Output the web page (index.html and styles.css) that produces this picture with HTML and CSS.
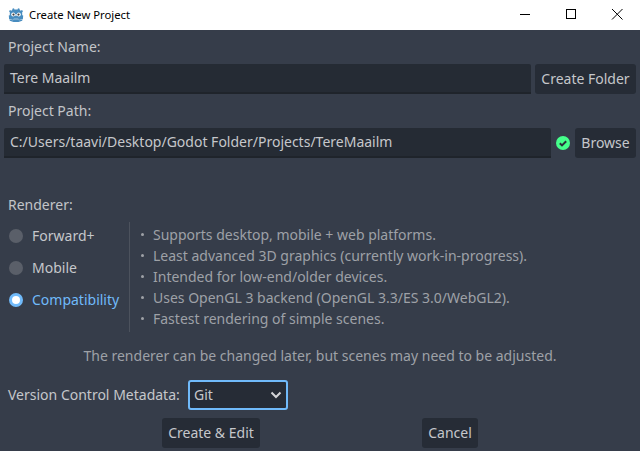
FILE: index.html
```html
<!DOCTYPE html>
<html lang="en">
<head>
<meta charset="utf-8">
<title>Create New Project</title>
<link rel="stylesheet" href="styles.css">
</head>
<body>
<div class="window">
  <header class="titlebar">
    <svg class="app-icon" width="16" height="16" viewBox="0 0 16 16">
      <path fill="#478cbf" d="M6 1.2 6.4 2.6H9.6L10 1.2 11.6 1.7 11.7 3.1 12.7 3.8 14 3 15 4.2 14.2 5.3V8.2L15.2 8.6 14.9 12.2 10.6 12.9 10.3 11.8H5.7L5.4 12.9 1.1 12.2.8 8.6 1.8 8.2V5.3L1 4.2 2 3 3.3 3.8 4.3 3.1 4.4 1.7Z"/>
      <path fill="#478cbf" d="M1.6 12.7 5.1 13.3 5.6 12.3H10.4L10.9 13.3 14.4 12.7 14.2 13.8 10.5 14.9H5.5L1.8 13.8Z"/>
      <circle cx="5.2" cy="7.4" r="2" fill="#fff"/><circle cx="10.8" cy="7.4" r="2" fill="#fff"/>
      <circle cx="5.5" cy="7.6" r="1.1" fill="#414042"/><circle cx="10.5" cy="7.6" r="1.1" fill="#414042"/>
      <rect x="7.4" y="7" width="1.2" height="2" fill="#fff"/>
    </svg>
    <span class="title">Create New Project</span>
    <div class="controls">
      <svg class="ctl" width="46" height="30" viewBox="0 0 46 30"><path d="M18 14.5H28" stroke="#000" fill="none"/></svg>
      <svg class="ctl" width="46" height="30" viewBox="0 0 46 30"><rect x="18.5" y="9.5" width="9" height="9" stroke="#000" fill="none"/></svg>
      <svg class="ctl" width="46" height="30" viewBox="0 0 46 30"><path d="M18 9 28.5 19.5M28.5 9 18 19.5" stroke="#000" fill="none"/></svg>
    </div>
  </header>
  <main class="content">
    <div class="label first">Project Name:</div>
    <div class="row">
      <div class="input grow">Tere Maailm</div>
      <div class="btn folder">Create Folder</div>
    </div>
    <div class="label second">Project Path:</div>
    <div class="row">
      <div class="input grow">C:/Users/taavi/Desktop/Godot Folder/Projects/TereMaailm</div>
      <svg class="status" width="14" height="14" viewBox="0 0 14 14"><circle cx="7" cy="7" r="7" fill="#45ff8b"/><path d="M3.8 7.2 6 9.4 10.2 5.2" stroke="#2a303a" stroke-width="2" fill="none"/></svg>
      <div class="btn browse">Browse</div>
    </div>
    <div class="label renderer">Renderer:</div>
    <div class="render-row">
      <div class="radios">
        <div class="radio"><span class="dot"></span>Forward+</div>
        <div class="radio"><span class="dot"></span>Mobile</div>
        <div class="radio on"><span class="dot"></span>Compatibility</div>
      </div>
      <div class="sep"></div>
      <ul class="features">
        <li>Supports desktop, mobile + web platforms.</li>
        <li>Least advanced 3D graphics (currently work-in-progress).</li>
        <li>Intended for low-end/older devices.</li>
        <li>Uses OpenGL 3 backend (OpenGL 3.3/ES 3.0/WebGL2).</li>
        <li>Fastest rendering of simple scenes.</li>
      </ul>
    </div>
    <div class="note">The renderer can be changed later, but scenes may need to be adjusted.</div>
    <div class="vcs">
      <span class="vcs-label">Version Control Metadata:</span>
      <div class="select">Git
        <svg width="12" height="8" viewBox="0 0 12 8"><path d="M1.5 1.5 6 6 10.5 1.5" stroke="#d4d5d8" stroke-width="2" fill="none"/></svg>
      </div>
    </div>
    <div class="actions">
      <div class="btn create">Create &amp; Edit</div>
      <div class="btn cancel">Cancel</div>
    </div>
  </main>
</div>
</body>
</html>
```
FILE: styles.css
```css
* { box-sizing: border-box; }
html, body { margin: 0; height: 100%; overflow: hidden; }
body { font-family: "Noto Sans", sans-serif; font-size: 14px; line-height: 20px; color: #c5c7cb; background: #363d4a; }
.window { width: 640px; height: 451px; display: flex; flex-direction: column; }
.titlebar { height: 30px; background: #fff; display: flex; align-items: center; padding-left: 8px; color: #000; font-size: 11.3px; flex: none; }
.app-icon { margin-top: -1px; }
.title { margin-left: 5px; }
.controls { margin-left: auto; display: flex; }
.ctl { display: block; }
.content { flex: 1; padding: 0 4px; display: flex; flex-direction: column; }
.label { padding-left: 4px; color: #c2c4c8; }
.first { margin-top: 7px; margin-bottom: 7px; }
.second { margin-top: 7px; margin-bottom: 7px; }
.row { display: flex; align-items: stretch; height: 30px; }
.input { background: #252b34; border-bottom: 2px solid #1f242b; border-radius: 2px 2px 0 0; padding: 4px 6px 0; color: #c5c7cb; }
.grow { flex: 1; }
.btn { background: #262c36; border-radius: 3px; display: flex; align-items: center; justify-content: center; color: #c5c7cb; height: 30px; }
.folder { width: 101px; margin-left: 4px; }
.status { margin: 8px 5px 0 5px; flex: none; }
.browse { width: 61px; }
.renderer { margin-top: 37px; }
.render-row { display: flex; margin-top: 7px; height: 110px; }
.radios { width: 125px; padding-left: 5px; margin-top: -2px; }
.radio { display: flex; align-items: center; height: 32px; color: #c5c7cb; }
.radio.on { color: #70bafa; }
.dot { width: 14px; height: 14px; border-radius: 50%; background: #5a5f69; margin-right: 9px; flex: none; }
.radio.on .dot { background: #fff; border: 3px solid #70bafa; }
.sep { width: 1px; background: #4c525d; }
.features { list-style: none; margin: 0; padding: 2px 0 0 10px; color: #9ea1a7; }
.features li { height: 21px; line-height: 21px; padding-left: 13px; position: relative; white-space: nowrap; }
.features li::before { content: ""; position: absolute; left: 1px; top: 9px; width: 3px; height: 3px; border-radius: 50%; background: #9ea1a7; }
.note { margin-top: 14px; text-align: center; color: #9ea1a7; }
.vcs { display: flex; align-items: center; margin-top: 14px; height: 30px; padding-left: 4px; }
.vcs-label { width: 180px; flex: none; white-space: nowrap; }
.select { width: 100px; height: 30px; background: #262c36; border: 2px solid #70bafa; border-radius: 3px; display: flex; align-items: center; justify-content: space-between; padding: 0 4px; color: #c5c7cb; }
.actions { display: flex; margin-top: 8px; padding-left: 158px; }
.create { width: 98px; }
.cancel { width: 56px; margin-left: 162px; }
```
